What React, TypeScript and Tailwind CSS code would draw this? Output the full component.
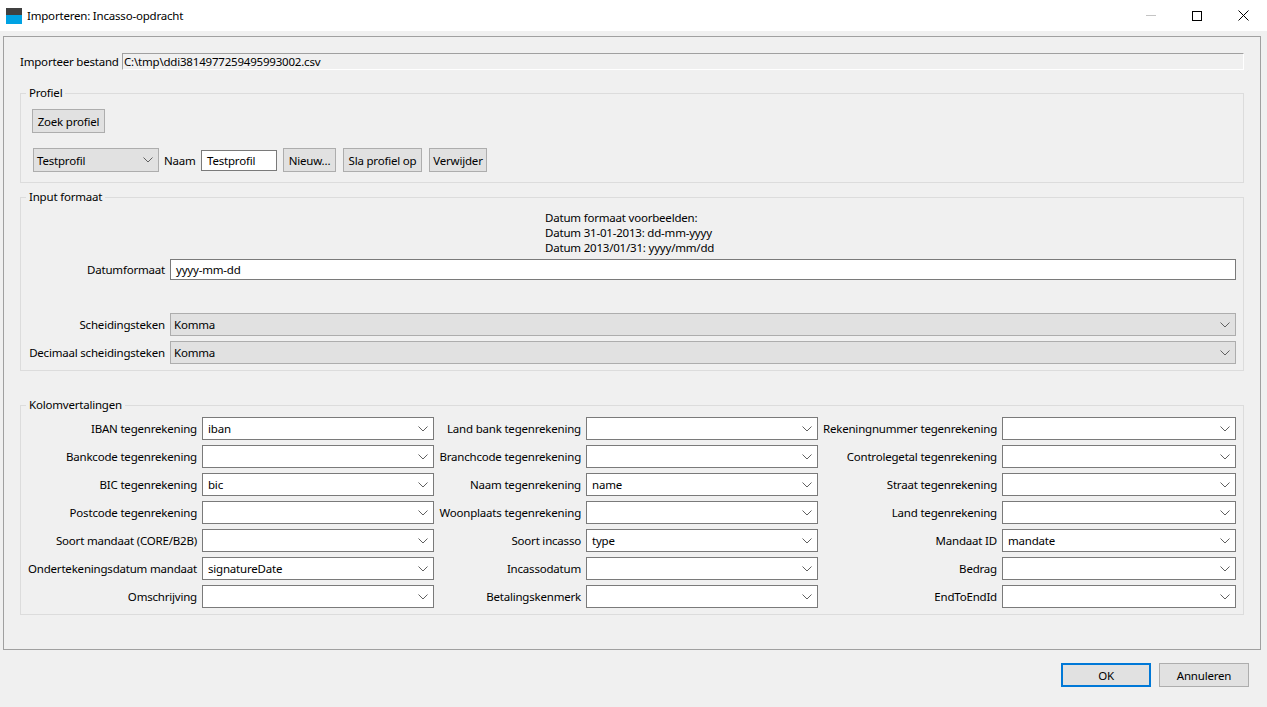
import type { ReactNode } from 'react';

const kolommen: [string, string][] = [
  ['IBAN tegenrekening', 'iban'],
  ['Land bank tegenrekening', ''],
  ['Rekeningnummer tegenrekening', ''],
  ['Bankcode tegenrekening', ''],
  ['Branchcode tegenrekening', ''],
  ['Controlegetal tegenrekening', ''],
  ['BIC tegenrekening', 'bic'],
  ['Naam tegenrekening', 'name'],
  ['Straat tegenrekening', ''],
  ['Postcode tegenrekening', ''],
  ['Woonplaats tegenrekening', ''],
  ['Land tegenrekening', ''],
  ['Soort mandaat (CORE/B2B)', ''],
  ['Soort incasso', 'type'],
  ['Mandaat ID', 'mandate'],
  ['Ondertekeningsdatum mandaat', 'signatureDate'],
  ['Incassodatum', ''],
  ['Bedrag', ''],
  ['Omschrijving', ''],
  ['Betalingskenmerk', ''],
  ['EndToEndId', ''],
];

function Chevron() {
  return (
    <svg width="10" height="6" viewBox="0 0 10 6" className="shrink-0" fill="none">
      <path d="M0.5 0.5 L5 5 L9.5 0.5" stroke="#606060" strokeWidth="1" />
    </svg>
  );
}

function Combo({ value, disabled, className = '' }: { value: string; disabled?: boolean; className?: string }) {
  return (
    <div
      className={`flex items-center justify-between border pr-[5px] ${
        disabled ? 'border-[#adadad] bg-[#e1e1e1] pl-[3px]' : 'border-[#7a7a7a] bg-white pl-[5px]'
      } ${className}`}
    >
      <span>{value}</span>
      <Chevron />
    </div>
  );
}

function Knop({ children, className = '' }: { children: ReactNode; className?: string }) {
  return (
    <button type="button" className={`flex h-[24px] items-center justify-center bg-[#e1e1e1] ${className}`}>
      {children}
    </button>
  );
}

function Groep({ title, className = '', children }: { title: string; className?: string; children: ReactNode }) {
  return (
    <fieldset className={`border border-[#dcdcdc] ${className}`}>
      <legend className="ml-[5px] h-[16px] px-[3px] leading-[16px]">{title}</legend>
      {children}
    </fieldset>
  );
}

export default function App() {
  return (
    <div className="flex h-[707px] w-[1267px] flex-col overflow-hidden bg-[#f0f0f0] text-[11.5px] leading-[15px] tracking-[-0.2px] text-black [font-family:'Noto_Sans',sans-serif]">
      {/* titelbalk */}
      <div className="flex h-[31px] items-center justify-between bg-white pl-[6px] pr-px">
        <div className="flex items-center gap-[5px]">
          <svg width="16" height="16" viewBox="0 0 16 16">
            <rect width="16" height="7" fill="#404040" />
            <rect y="7" width="16" height="9" fill="#00a2e3" />
          </svg>
          <span>Importeren: Incasso-opdracht</span>
        </div>
        <div className="flex">
          <div className="flex h-[31px] w-[46px] items-center justify-center">
            <div className="h-px w-[10px] bg-[#c4c4c4]" />
          </div>
          <div className="flex h-[31px] w-[46px] items-center justify-center">
            <div className="h-[10px] w-[10px] border border-black" />
          </div>
          <div className="flex h-[31px] w-[46px] items-center justify-center">
            <svg width="11" height="11" viewBox="0 0 11 11" fill="none">
              <path d="M0.5 0.5 L10.5 10.5 M10.5 0.5 L0.5 10.5" stroke="#000" strokeWidth="1" />
            </svg>
          </div>
        </div>
      </div>

      <div className="ml-[3px] mt-[5px] h-[614px] w-[1258px] border border-[#a0a0a0] px-[16px] pt-[16px]">
        {/* bestand */}
        <div className="flex h-[17px] items-center">
          <span className="w-[102px] shrink-0 whitespace-nowrap">Importeer bestand</span>
          <div className="flex h-[17px] flex-1 items-center border border-b-white border-l-[#a0a0a0] border-r-white border-t-[#a0a0a0] pl-[1px]">
            C:\tmp\ddi3814977259495993002.csv
          </div>
        </div>

        <Groep title="Profiel" className="mt-[15px] h-[98px]">
          <div className="pl-[11px]">
            <Knop className="mt-[8px] w-[73px] border border-[#adadad]">Zoek profiel</Knop>
            <div className="mt-[15px] flex h-[24px] items-center">
              <Combo value="Testprofil" disabled className="ml-px h-[24px] w-[126px]" />
              <span className="ml-[5px] w-[37px]">Naam</span>
              <div className="flex h-[21px] w-[76px] items-center border border-[#7a7a7a] bg-white pl-[5px]">Testprofil</div>
              <Knop className="ml-[6px] w-[53px] border border-[#adadad]">Nieuw...</Knop>
              <Knop className="ml-[7px] w-[79px] border border-[#adadad]">Sla profiel op</Knop>
              <Knop className="ml-[7px] w-[58px] border border-[#adadad]">Verwijder</Knop>
            </div>
          </div>
        </Groep>

        <Groep title="Input formaat" className="mt-[6px] h-[182px]">
          <div className="px-[7px]">
            <div className="mt-[5px] pl-[517px]">
              <div>Datum formaat voorbeelden:</div>
              <div>Datum 31-01-2013: dd-mm-yyyy</div>
              <div>Datum 2013/01/31: yyyy/mm/dd</div>
            </div>
            <div className="mt-[4px] flex items-center gap-[5px]">
              <span className="w-[137px] text-right">Datumformaat</span>
              <div className="flex h-[21px] flex-1 items-center border border-[#7a7a7a] bg-white pl-[5px]">yyyy-mm-dd</div>
            </div>
            <div className="mt-[33px] flex items-center gap-[5px]">
              <span className="w-[137px] text-right">Scheidingsteken</span>
              <Combo value="Komma" disabled className="h-[23px] flex-1" />
            </div>
            <div className="mt-[5px] flex items-center gap-[5px]">
              <span className="w-[137px] whitespace-nowrap text-right">Decimaal scheidingsteken</span>
              <Combo value="Komma" disabled className="h-[23px] flex-1" />
            </div>
          </div>
        </Groep>

        <Groep title="Kolomvertalingen" className="mt-[26px] h-[218px]">
          <div className="mt-[4px] grid grid-cols-[169px_232px_142px_232px_174px_234px] gap-[5px] pl-[7px]">
            {kolommen.map(([label, value]) => (
              <div key={label} className="contents">
                <span className="self-center whitespace-nowrap text-right">{label}</span>
                <Combo value={value} className="h-[23px]" />
              </div>
            ))}
          </div>
        </Groep>
      </div>

      <div className="ml-[1061px] mt-[13px] flex gap-[8px]">
        <Knop className="w-[90px] border-2 border-[#0078d7]">OK</Knop>
        <Knop className="w-[90px] border border-[#adadad]">Annuleren</Knop>
      </div>
    </div>
  );
}
